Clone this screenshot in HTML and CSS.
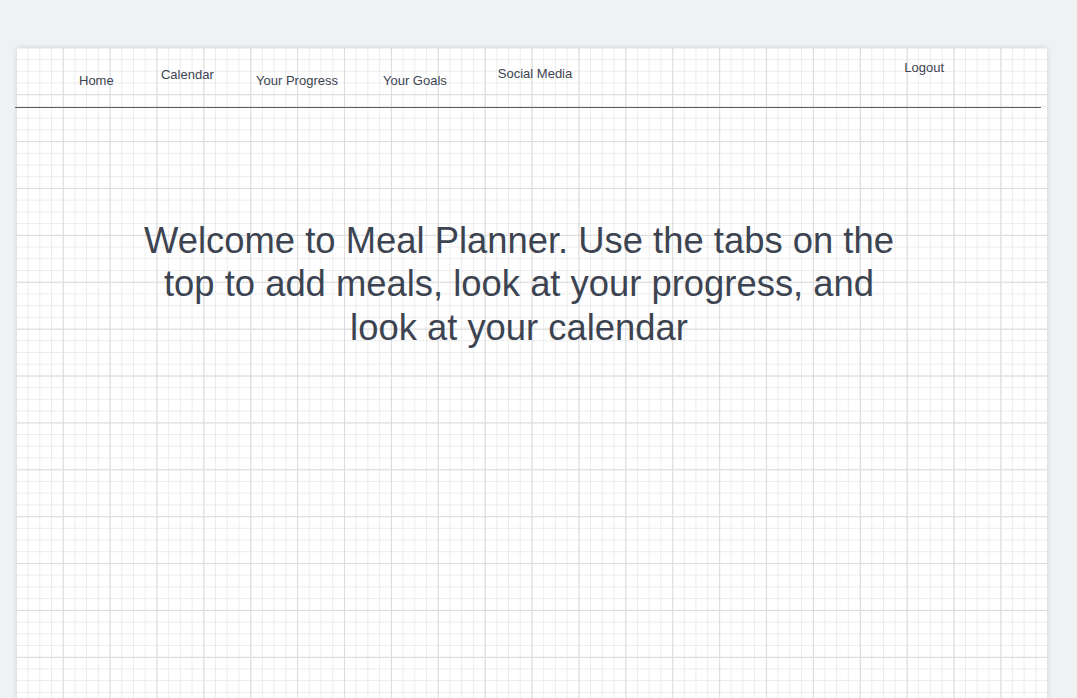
FILE: index.html
```html
<!DOCTYPE html>
<html lang="en">
<head>
<meta charset="utf-8">
<title>Meal Planner</title>
<link rel="stylesheet" href="styles.css">
</head>
<body>
  <div class="sheet">
    <nav class="nav">
      <a class="nav-item nav-home" href="#">Home</a>
      <a class="nav-item nav-calendar" href="#">Calendar</a>
      <a class="nav-item nav-progress" href="#">Your Progress</a>
      <a class="nav-item nav-goals" href="#">Your Goals</a>
      <a class="nav-item nav-social" href="#">Social Media</a>
      <a class="nav-item nav-logout" href="#">Logout</a>
    </nav>
    <div class="rule"></div>
    <main class="content">
      <h1 class="welcome">Welcome to Meal Planner. Use the tabs on the top to add meals, look at your progress, and look at your calendar</h1>
    </main>
  </div>
</body>
</html>
```

FILE: styles.css
```css
html, body {
  margin: 0;
  padding: 0;
}

body {
  background: #f0f1f3;
  font-family: "Liberation Sans", Arial, sans-serif;
  color: #3d4451;
  padding: 48px 0 0 17px;
  overflow: hidden;
  height: 698px;
  box-sizing: border-box;
}

.sheet {
  width: 1030px;
  min-height: 720px;
  background-color: #ffffff;
  background-image:
    linear-gradient(to right, #dcdcdc 1px, transparent 1px),
    linear-gradient(to bottom, #dcdcdc 1px, transparent 1px),
    linear-gradient(to right, #ececec 1px, transparent 1px),
    linear-gradient(to bottom, #ececec 1px, transparent 1px);
  background-size:
    46.9px 46.9px,
    46.9px 46.9px,
    11.725px 11.725px,
    11.725px 11.725px;
  background-position:
    -1.2px -0.7px,
    -1.2px -0.7px,
    -1.2px -0.7px,
    -1.2px -0.7px;
  box-shadow: 0 0 5px rgba(0, 0, 0, 0.14);
}

.nav {
  display: flex;
  align-items: flex-start;
  height: 59px;
}

.nav-item {
  font-size: 13px;
  line-height: 15px;
  color: #3d4451;
  text-decoration: none;
  white-space: nowrap;
}

.nav-home { margin: 25px 0 0 62px; }
.nav-calendar { margin: 19px 0 0 47.3px; }
.nav-progress { margin: 25px 0 0 42.3px; }
.nav-goals { margin: 25px 0 0 45px; }
.nav-social { margin: 18px 0 0 51px; }
.nav-logout { margin: 12px 0 0 332px; }

.rule {
  height: 1px;
  background: #5c5c5c;
  margin: 0 6px 0 -2px;
}

.content {
  padding: 111px 0 0 122px;
}

.welcome {
  width: 760px;
  margin: 0;
  font-size: 36.4px;
  font-weight: normal;
  line-height: 43.4px;
  text-align: center;
  color: #3d4451;
}
```
